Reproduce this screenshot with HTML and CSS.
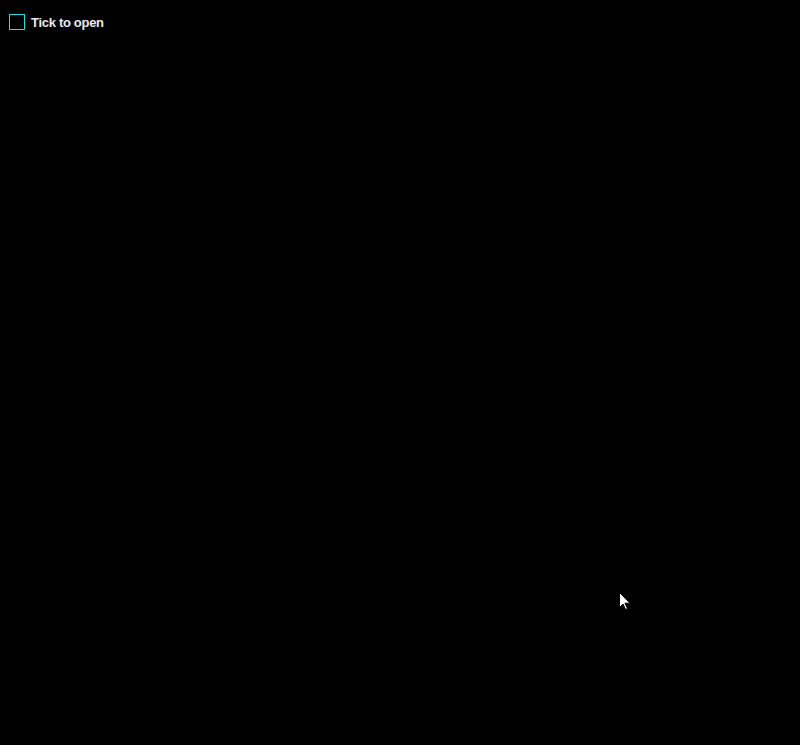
FILE: index.html
```html
<!DOCTYPE html>
<html>
<head>
<meta charset="utf-8">
<link rel="stylesheet" href="styles.css">
</head>
<body>
<label class="toggle">
  <input type="checkbox" class="box">
  <span class="label-text">Tick to open</span>
</label>
<svg class="cursor" width="12" height="19" viewBox="0 0 12 19">
  <path d="M0.5 0.5 L0.5 15.5 L4 12 L6.5 17.5 L8.5 16.5 L6 11.2 L11 11.2 Z" fill="#fff" stroke="#000" stroke-width="1"/>
</svg>
</body>
</html>
```
FILE: styles.css
```css
html, body {
  margin: 0;
  padding: 0;
  background: #000;
  width: 800px;
  height: 745px;
  overflow: hidden;
}
body {
  font-family: "Liberation Sans", Arial, sans-serif;
  padding: 14px 9px;
  box-sizing: border-box;
}
.toggle {
  display: inline-flex;
  align-items: center;
  gap: 6px;
  cursor: pointer;
}
.box {
  appearance: none;
  -webkit-appearance: none;
  margin: 0;
  width: 16px;
  height: 16px;
  border: 1px solid #1de0e8;
  background: #000;
  box-sizing: border-box;
}
.label-text {
  color: #eaeaea;
  font-weight: bold;
  font-size: 13px;
  letter-spacing: -0.3px;
}
.cursor {
  position: absolute;
  left: 619px;
  top: 592px;
}
```
